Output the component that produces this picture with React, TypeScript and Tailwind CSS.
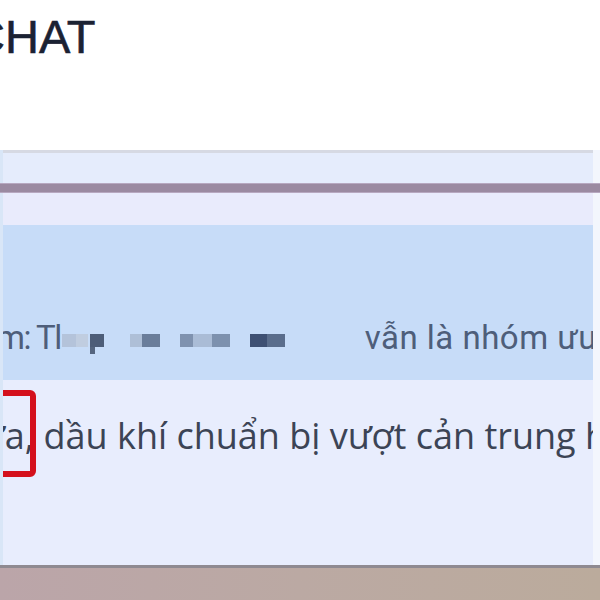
import React from "react";

export default function App() {
  return (
    <div className="w-[600px] h-[600px] overflow-hidden bg-white flex flex-col">
      {/* header */}
      <div className="h-[150px] shrink-0 bg-white overflow-hidden">
        <div
          className="mt-[8px] ml-[-29px] text-[47px] leading-[58px] text-[#1b2233] whitespace-nowrap [-webkit-text-stroke:0.6px_#1b2233]"
          style={{ fontFamily: '"Liberation Sans", Arial, sans-serif' }}
        >
          CHAT
        </div>
      </div>

      {/* panel */}
      <div className="h-[415px] shrink-0 flex flex-col border-l-[3px] border-l-[#d9e6f7] border-r-[7px] border-r-[#f3f6fd] bg-[#e7edfc]">
        <div className="h-[3px] bg-[#d6d9e3]" />
        <div className="h-[30px] bg-[#e5ecfc]" />
        <div className="h-[10px] bg-[#9b8aa1] border-y border-[#b7a8c0] -ml-[3px] -mr-[7px]" />
        <div className="h-[32px] bg-[#e9ebfc]" />

        {/* blue band */}
        <div className="h-[155px] bg-[#c7dcf8] flex items-end pb-[20px] overflow-hidden">
          <div
            className="flex items-center whitespace-nowrap text-[33px] leading-[44px] tracking-[0.5px] text-[#4e5e7a] ml-[-7px]"
            style={{ fontFamily: 'Roboto, "Noto Sans", sans-serif' }}
          >
            <span className="tracking-[-1.5px]">m: Tl</span>
            <div className="flex items-start ml-[1px] mt-[12px]">
              <div className="w-[14px] h-[13px] bg-[#b4c3da]" />
              <div className="w-[12px] h-[13px] bg-[#c0cde0]" />
              <div className="flex flex-col ml-[2px]">
                <div className="w-[14px] h-[13px] bg-[#4d5d78]" />
                <div className="w-[5px] h-[7px] bg-[#55657f]" />
              </div>
              <div className="w-[12px] h-[13px] bg-[#aebfd7] ml-[26px]" />
              <div className="w-[18px] h-[13px] bg-[#6a7d9a]" />
              <div className="w-[13px] h-[13px] bg-[#7f92af] ml-[20px]" />
              <div className="w-[19px] h-[13px] bg-[#aabcd6]" />
              <div className="w-[18px] h-[13px] bg-[#7d91ae]" />
              <div className="w-[17px] h-[13px] bg-[#3e5073] ml-[20px]" />
              <div className="w-[18px] h-[13px] bg-[#5a6d8c]" />
            </div>
            <span className="ml-[80px]">vẫn là nhóm ưu</span>
          </div>
        </div>

        {/* light region */}
        <div className="h-[185px] bg-[#e8edfd] pt-[10px] overflow-hidden">
          <div className="relative h-[87px] flex items-center">
            <div
              className="whitespace-nowrap text-[36px] leading-[44px] text-[#3c4455] ml-[-22px] mt-[4px]"
              style={{ fontFamily: '"Open Sans", "Noto Sans", sans-serif' }}
            >
              ừa, dầu khí chuẩn bị vượt cản trung hạn
            </div>
            <div className="absolute -left-[20px] top-0 w-[53px] h-[87px] border-[6px] border-[#d4101c] rounded-[6px]" />
          </div>
        </div>
      </div>

      {/* bottom strip */}
      <div className="h-[35px] shrink-0 border-t-[3px] border-[#8f8a91] bg-gradient-to-r from-[#bba5a9] via-[#bba9a3] to-[#bbab9c]" />
    </div>
  );
}
